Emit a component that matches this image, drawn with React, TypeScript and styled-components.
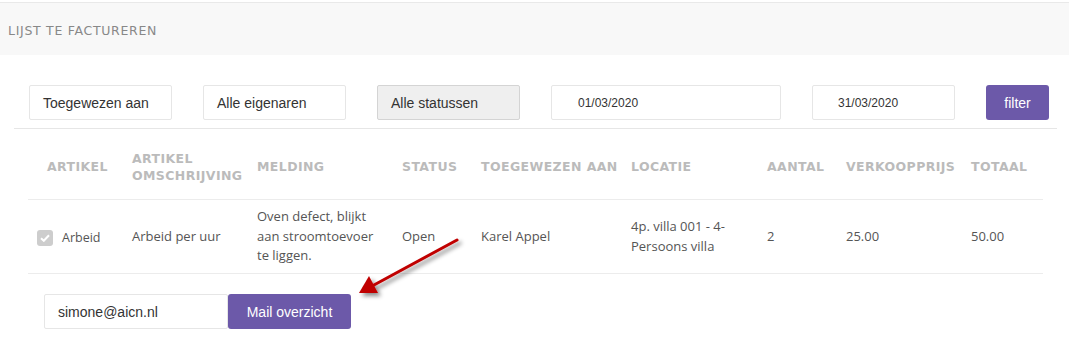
import * as React from 'react';
import styled, { createGlobalStyle } from 'styled-components';

const GlobalStyle = createGlobalStyle`
  html, body {
    margin: 0;
    padding: 0;
    background: #fff;
  }
  body {
    font-family: 'Open Sans', 'Liberation Sans', sans-serif;
  }
`;

const Page = styled.div`
  position: relative;
  width: 1069px;
  height: 344px;
  padding-top: 2px;
  box-sizing: border-box;
  overflow: hidden;
`;

const TitleBar = styled.header`
  height: 53px;
  border-top: 1px solid #e9e9e9;
  background-color: #f8f8f8;
  display: flex;
  align-items: center;
  padding: 3px 0 0 8px;
  box-sizing: border-box;
`;

const Title = styled.h1`
  margin: 0;
  font-family: 'DejaVu Sans', sans-serif;
  font-weight: normal;
  font-size: 12.5px;
  letter-spacing: 0.7px;
  color: #888;
`;

const Panel = styled.section`
  margin: 30px 12px 0 14px;
`;

const FilterRow = styled.div`
  display: flex;
  gap: 31px;
  padding: 0 0 8px 15px;
  border-bottom: 1px solid #e6e6e6;
`;

const Field = styled.div<{ $width: number; $grey?: boolean; $small?: boolean; $indent?: number }>`
  width: ${p => p.$width}px;
  height: 35px;
  box-sizing: border-box;
  display: flex;
  align-items: center;
  padding-left: ${p => p.$indent ?? 13}px;
  border: 1px solid ${p => (p.$grey ? '#d4d4d4' : '#e6e6e6')};
  border-radius: 2px;
  background: ${p => (p.$grey ? '#efefef' : '#fff')};
  font-family: 'Liberation Sans', Arial, sans-serif;
  font-size: ${p => (p.$small ? 12 : 14)}px;
  color: #333;
`;

const PurpleButton = styled.button<{ $width: number }>`
  width: ${p => p.$width}px;
  height: 35px;
  border: none;
  border-radius: 3px;
  background: #6c59a9;
  color: #fff;
  font-family: 'Liberation Sans', Arial, sans-serif;
  font-size: 14px;
  padding: 0;
  cursor: pointer;
`;

const Table = styled.table`
  margin-left: 14px;
  width: 1015px;
  border-collapse: collapse;
  table-layout: fixed;
`;

const Th = styled.th<{ $indent?: number }>`
  height: 65px;
  padding: 5px 4px 0 ${p => p.$indent ?? 8}px;
  text-align: left;
  vertical-align: middle;
  font-family: 'DejaVu Sans', sans-serif;
  font-weight: bold;
  font-size: 12.5px;
  letter-spacing: 0.4px;
  line-height: 17px;
  color: #bbb;
  border-bottom: 1px solid #ececec;
`;

const Td = styled.td`
  height: 73px;
  padding: 0 8px;
  vertical-align: middle;
  font-family: 'Open Sans', sans-serif;
  font-size: 13px;
  line-height: 19.5px;
  color: #555;
  border-bottom: 1px solid #ececec;
`;

const ItemCell = styled.div`
  display: flex;
  align-items: center;
  gap: 9px;
  padding-left: 1px;
  padding-top: 3px;
  font-size: 12.5px;
`;

const Check = styled.span`
  width: 16px;
  height: 16px;
  border-radius: 3px;
  background: #cdcdcd;
  display: inline-flex;
  align-items: center;
  justify-content: center;
`;

const MailRow = styled.div`
  display: flex;
  margin: 20px 0 0 30px;
`;

const Overlay = styled.svg`
  position: absolute;
  left: 0;
  top: 0;
  pointer-events: none;
`;

const columns = [
  { label: 'ARTIKEL', width: 96, indent: 19 },
  { label: 'ARTIKEL OMSCHRIJVING', width: 125 },
  { label: 'MELDING', width: 145 },
  { label: 'STATUS', width: 79 },
  { label: 'TOEGEWEZEN AAN', width: 150 },
  { label: 'LOCATIE', width: 136 },
  { label: 'AANTAL', width: 79 },
  { label: 'VERKOOPPRIJS', width: 125 },
  { label: 'TOTAAL', width: 80 },
];

export default function App() {
  return (
    <Page>
      <GlobalStyle />
      <TitleBar>
        <Title>LIJST TE FACTUREREN</Title>
      </TitleBar>
      <Panel>
        <FilterRow>
          <Field $width={143}>Toegewezen aan</Field>
          <Field $width={143}>Alle eigenaren</Field>
          <Field $width={143} $grey>Alle statussen</Field>
          <Field $width={230} $small $indent={26}>01/03/2020</Field>
          <Field $width={143} $small $indent={25}>31/03/2020</Field>
          <PurpleButton $width={63}>filter</PurpleButton>
        </FilterRow>
        <Table>
          <colgroup>
            {columns.map(c => (
              <col key={c.label} style={{ width: c.width }} />
            ))}
          </colgroup>
          <thead>
            <tr>
              {columns.map(c => (
                <Th key={c.label} $indent={c.indent}>
                  {c.label}
                </Th>
              ))}
            </tr>
          </thead>
          <tbody>
            <tr>
              <Td>
                <ItemCell>
                  <Check>
                    <svg width="10" height="8" viewBox="0 0 10 8">
                      <path d="M1 4.2 L3.8 6.8 L9 1.2" fill="none" stroke="#fff" strokeWidth="2" />
                    </svg>
                  </Check>
                  Arbeid
                </ItemCell>
              </Td>
              <Td>Arbeid per uur</Td>
              <Td>Oven defect, blijkt aan stroomtoevoer te liggen.</Td>
              <Td>Open</Td>
              <Td>Karel Appel</Td>
              <Td>4p. villa 001 - 4-Persoons villa</Td>
              <Td>2</Td>
              <Td>25.00</Td>
              <Td>50.00</Td>
            </tr>
          </tbody>
        </Table>
        <MailRow>
          <Field $width={184}>simone@aicn.nl</Field>
          <PurpleButton $width={123}>Mail overzicht</PurpleButton>
        </MailRow>
      </Panel>
      <Overlay width="1069" height="344">
        <defs>
          <filter id="shadow" x="-20%" y="-20%" width="140%" height="140%">
            <feDropShadow dx="3" dy="3" stdDeviation="2" floodColor="#000" floodOpacity="0.45" />
          </filter>
        </defs>
        <g filter="url(#shadow)">
          <line x1="457" y1="240" x2="374" y2="285" stroke="#c00000" strokeWidth="3" strokeLinecap="round" />
          <polygon points="359,293 369,276 378,293" fill="#c00000" />
        </g>
      </Overlay>
    </Page>
  );
}
